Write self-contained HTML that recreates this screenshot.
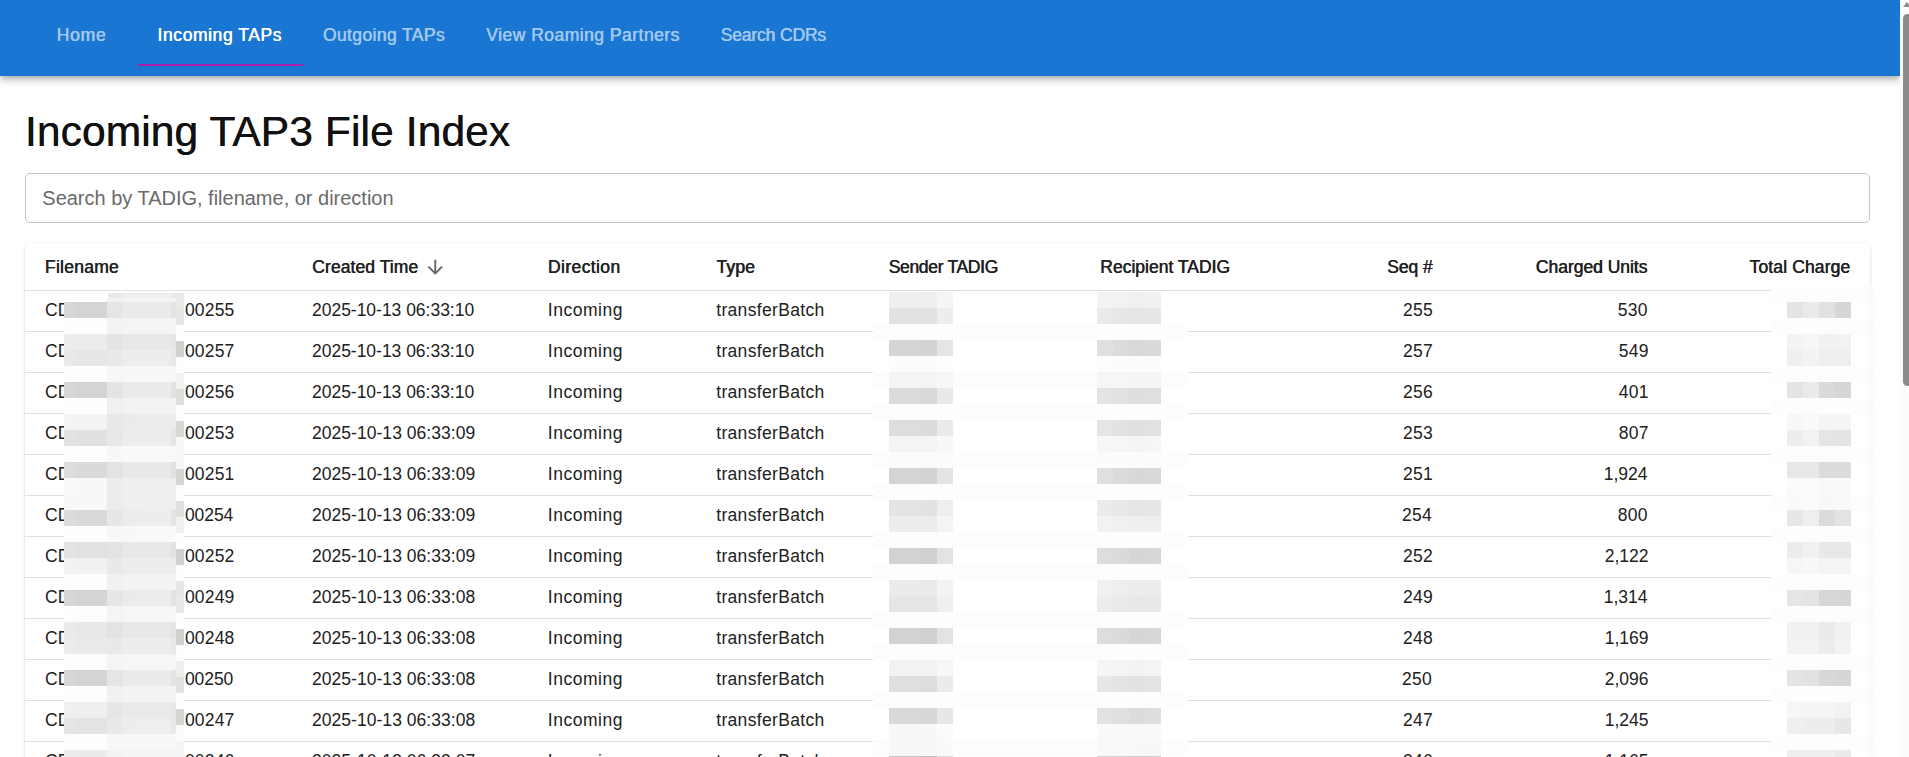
<!DOCTYPE html>
<html><head><meta charset="utf-8"><title>Incoming TAP3 File Index</title>
<style>
html,body{margin:0;padding:0;}
html,body{width:1909px;height:757px;overflow:hidden;background:#fff;}
#root{position:relative;width:1909px;height:757px;overflow:hidden;background:#fff;font-family:"Liberation Sans",sans-serif;}
.t{position:absolute;white-space:pre;line-height:1;color:#212121;font-size:17.5px;}
.m{text-shadow:0.55px 0 0 currentColor;}
.tb{text-shadow:0.4px 0 0 currentColor;}
.n{color:#a3c8ed;}
#bar{position:absolute;left:0;top:0;width:1900px;height:76px;background:#1976d2;box-shadow:0 2.5px 5px -1.25px rgba(0,0,0,.2),0 5px 6.25px 0 rgba(0,0,0,.14),0 1.25px 12.5px 0 rgba(0,0,0,.12);}
#ind{position:absolute;left:138px;top:64px;width:165px;height:2px;background:#a621ac;}
#sb{position:absolute;left:1900px;top:0;width:9px;height:757px;background:#fcfcfc;overflow:hidden;}
#thumb{position:absolute;left:3px;top:14px;width:9px;height:372px;border-radius:5px;background:#8b8b8b;}
#arr{position:absolute;left:3.3px;top:1.8px;width:0;height:0;border-left:4.5px solid transparent;border-right:4.5px solid transparent;border-bottom:5px solid #8b8b8b;}
#search{position:absolute;left:25px;top:173px;width:1843px;height:48px;border:1px solid #c4c4c4;border-radius:5px;}
#paper{position:absolute;left:25px;top:242.5px;width:1845px;height:600px;border-radius:5px;background:#fff;box-shadow:0 2.5px 1.25px -1.25px rgba(0,0,0,.2),0 1.25px 1.25px 0 rgba(0,0,0,.14),0 1.25px 3.75px 0 rgba(0,0,0,.12);}
.ln{position:absolute;left:25px;width:1845px;height:1px;background:#e0e0e0;}
#mos{position:absolute;left:0;top:0;}
</style></head><body><div id="root">
<div id="bar"></div><div id="ind"></div>
<div id="search"></div><div id="paper"></div>
<div class="ln" style="top:290px"></div>
<div class="ln" style="top:331px"></div>
<div class="ln" style="top:372px"></div>
<div class="ln" style="top:413px"></div>
<div class="ln" style="top:454px"></div>
<div class="ln" style="top:495px"></div>
<div class="ln" style="top:536px"></div>
<div class="ln" style="top:577px"></div>
<div class="ln" style="top:618px"></div>
<div class="ln" style="top:659px"></div>
<div class="ln" style="top:700px"></div>
<div class="ln" style="top:741px"></div>
<svg style="position:absolute;left:424px;top:256px" width="22.5" height="22.5" viewBox="0 0 24 24"><path fill="#666" d="M20 12l-1.41-1.41L13 16.17V4h-2v12.17l-5.58-5.59L4 12l8 8 8-8z"/></svg>
<div class="t m n" style="left:56.4px;top:27px;letter-spacing:0.8px;">Home</div>
<div class="t m" style="left:157.3px;top:27px;letter-spacing:0.58px;color:#ffffff;">Incoming TAPs</div>
<div class="t m n" style="left:322.7px;top:27px;letter-spacing:0.39px;">Outgoing TAPs</div>
<div class="t m n" style="left:486px;top:27px;letter-spacing:0.48px;">View Roaming Partners</div>
<div class="t m n" style="left:720.4px;top:27px;letter-spacing:-0.15px;">Search CDRs</div>
<div class="t tb" style="left:24.75px;top:111px;font-size:42.5px;letter-spacing:0.11px;color:#111111;">Incoming TAP3 File Index</div>
<div class="t" style="left:42.3px;top:188px;font-size:20px;letter-spacing:-0.01px;color:#6a6a6a;">Search by TADIG, filename, or direction</div>
<div class="t m" style="left:44.7px;top:259px;letter-spacing:0.27px;">Filename</div>
<div class="t m" style="left:312px;top:259px;letter-spacing:0.08px;">Created Time</div>
<div class="t m" style="left:547.8px;top:259px;letter-spacing:0.38px;">Direction</div>
<div class="t m" style="left:716.2px;top:259px;letter-spacing:0.21px;">Type</div>
<div class="t m" style="left:888.4px;top:259px;letter-spacing:-0.32px;">Sender TADIG</div>
<div class="t m" style="left:1100px;top:259px;letter-spacing:0.01px;">Recipient TADIG</div>
<div class="t m" style="left:1387px;top:259px;letter-spacing:-0.09px;">Seq #</div>
<div class="t m" style="left:1535.6px;top:259px;letter-spacing:-0.02px;">Charged Units</div>
<div class="t m" style="left:1749.3px;top:259px;letter-spacing:0.13px;">Total Charge</div>
<div class="t" style="left:44.9px;top:302px;letter-spacing:0.15px;">CD</div>
<div class="t" style="left:184.9px;top:302px;letter-spacing:0.19px;">00255</div>
<div class="t" style="left:312px;top:302px;letter-spacing:-0.02px;">2025-10-13 06:33:10</div>
<div class="t" style="left:547.8px;top:302px;letter-spacing:0.52px;">Incoming</div>
<div class="t" style="left:716.2px;top:302px;letter-spacing:0.33px;">transferBatch</div>
<div class="t" style="left:1403.03px;top:302px;letter-spacing:0.3px;">255</div>
<div class="t" style="left:1617.63px;top:302px;letter-spacing:0.3px;">530</div>
<div class="t" style="left:44.9px;top:343px;letter-spacing:0.15px;">CD</div>
<div class="t" style="left:184.9px;top:343px;letter-spacing:0.19px;">00257</div>
<div class="t" style="left:312px;top:343px;letter-spacing:-0.02px;">2025-10-13 06:33:10</div>
<div class="t" style="left:547.8px;top:343px;letter-spacing:0.52px;">Incoming</div>
<div class="t" style="left:716.2px;top:343px;letter-spacing:0.33px;">transferBatch</div>
<div class="t" style="left:1403.03px;top:343px;letter-spacing:0.3px;">257</div>
<div class="t" style="left:1618.63px;top:343px;letter-spacing:0.3px;">549</div>
<div class="t" style="left:44.9px;top:384px;letter-spacing:0.15px;">CD</div>
<div class="t" style="left:184.9px;top:384px;letter-spacing:0.19px;">00256</div>
<div class="t" style="left:312px;top:384px;letter-spacing:-0.02px;">2025-10-13 06:33:10</div>
<div class="t" style="left:547.8px;top:384px;letter-spacing:0.52px;">Incoming</div>
<div class="t" style="left:716.2px;top:384px;letter-spacing:0.33px;">transferBatch</div>
<div class="t" style="left:1403.03px;top:384px;letter-spacing:0.3px;">256</div>
<div class="t" style="left:1618.63px;top:384px;letter-spacing:0.3px;">401</div>
<div class="t" style="left:44.9px;top:425px;letter-spacing:0.15px;">CD</div>
<div class="t" style="left:184.9px;top:425px;letter-spacing:0.19px;">00253</div>
<div class="t" style="left:312px;top:425px;letter-spacing:0.04px;">2025-10-13 06:33:09</div>
<div class="t" style="left:547.8px;top:425px;letter-spacing:0.52px;">Incoming</div>
<div class="t" style="left:716.2px;top:425px;letter-spacing:0.33px;">transferBatch</div>
<div class="t" style="left:1403.03px;top:425px;letter-spacing:0.3px;">253</div>
<div class="t" style="left:1618.63px;top:425px;letter-spacing:0.3px;">807</div>
<div class="t" style="left:44.9px;top:466px;letter-spacing:0.15px;">CD</div>
<div class="t" style="left:184.9px;top:466px;letter-spacing:0.19px;">00251</div>
<div class="t" style="left:312px;top:466px;letter-spacing:0.04px;">2025-10-13 06:33:09</div>
<div class="t" style="left:547.8px;top:466px;letter-spacing:0.52px;">Incoming</div>
<div class="t" style="left:716.2px;top:466px;letter-spacing:0.33px;">transferBatch</div>
<div class="t" style="left:1403.03px;top:466px;letter-spacing:0.3px;">251</div>
<div class="t" style="left:1603.84px;top:466px;letter-spacing:-0.05px;">1,924</div>
<div class="t" style="left:44.9px;top:507px;letter-spacing:0.15px;">CD</div>
<div class="t" style="left:184.9px;top:507px;letter-spacing:-0.06px;">00254</div>
<div class="t" style="left:312px;top:507px;letter-spacing:0.04px;">2025-10-13 06:33:09</div>
<div class="t" style="left:547.8px;top:507px;letter-spacing:0.52px;">Incoming</div>
<div class="t" style="left:716.2px;top:507px;letter-spacing:0.33px;">transferBatch</div>
<div class="t" style="left:1402.03px;top:507px;letter-spacing:0.3px;">254</div>
<div class="t" style="left:1617.63px;top:507px;letter-spacing:0.3px;">800</div>
<div class="t" style="left:44.9px;top:548px;letter-spacing:0.15px;">CD</div>
<div class="t" style="left:184.9px;top:548px;letter-spacing:0.19px;">00252</div>
<div class="t" style="left:312px;top:548px;letter-spacing:0.04px;">2025-10-13 06:33:09</div>
<div class="t" style="left:547.8px;top:548px;letter-spacing:0.52px;">Incoming</div>
<div class="t" style="left:716.2px;top:548px;letter-spacing:0.33px;">transferBatch</div>
<div class="t" style="left:1403.03px;top:548px;letter-spacing:0.3px;">252</div>
<div class="t" style="left:1604.84px;top:548px;letter-spacing:-0.05px;">2,122</div>
<div class="t" style="left:44.9px;top:589px;letter-spacing:0.15px;">CD</div>
<div class="t" style="left:184.9px;top:589px;letter-spacing:0.19px;">00249</div>
<div class="t" style="left:312px;top:589px;letter-spacing:0.04px;">2025-10-13 06:33:08</div>
<div class="t" style="left:547.8px;top:589px;letter-spacing:0.52px;">Incoming</div>
<div class="t" style="left:716.2px;top:589px;letter-spacing:0.33px;">transferBatch</div>
<div class="t" style="left:1403.03px;top:589px;letter-spacing:0.3px;">249</div>
<div class="t" style="left:1603.84px;top:589px;letter-spacing:-0.05px;">1,314</div>
<div class="t" style="left:44.9px;top:630px;letter-spacing:0.15px;">CD</div>
<div class="t" style="left:184.9px;top:630px;letter-spacing:0.19px;">00248</div>
<div class="t" style="left:312px;top:630px;letter-spacing:0.04px;">2025-10-13 06:33:08</div>
<div class="t" style="left:547.8px;top:630px;letter-spacing:0.52px;">Incoming</div>
<div class="t" style="left:716.2px;top:630px;letter-spacing:0.33px;">transferBatch</div>
<div class="t" style="left:1403.03px;top:630px;letter-spacing:0.3px;">248</div>
<div class="t" style="left:1604.84px;top:630px;letter-spacing:-0.05px;">1,169</div>
<div class="t" style="left:44.9px;top:671px;letter-spacing:0.15px;">CD</div>
<div class="t" style="left:184.9px;top:671px;letter-spacing:-0.06px;">00250</div>
<div class="t" style="left:312px;top:671px;letter-spacing:0.04px;">2025-10-13 06:33:08</div>
<div class="t" style="left:547.8px;top:671px;letter-spacing:0.52px;">Incoming</div>
<div class="t" style="left:716.2px;top:671px;letter-spacing:0.33px;">transferBatch</div>
<div class="t" style="left:1402.03px;top:671px;letter-spacing:0.3px;">250</div>
<div class="t" style="left:1604.84px;top:671px;letter-spacing:-0.05px;">2,096</div>
<div class="t" style="left:44.9px;top:712px;letter-spacing:0.15px;">CD</div>
<div class="t" style="left:184.9px;top:712px;letter-spacing:0.19px;">00247</div>
<div class="t" style="left:312px;top:712px;letter-spacing:0.04px;">2025-10-13 06:33:08</div>
<div class="t" style="left:547.8px;top:712px;letter-spacing:0.52px;">Incoming</div>
<div class="t" style="left:716.2px;top:712px;letter-spacing:0.33px;">transferBatch</div>
<div class="t" style="left:1403.03px;top:712px;letter-spacing:0.3px;">247</div>
<div class="t" style="left:1604.84px;top:712px;letter-spacing:-0.05px;">1,245</div>
<div class="t" style="left:44.9px;top:753px;letter-spacing:0.15px;">CD</div>
<div class="t" style="left:184.9px;top:753px;letter-spacing:0.19px;">00246</div>
<div class="t" style="left:312px;top:753px;letter-spacing:0.04px;">2025-10-13 06:33:07</div>
<div class="t" style="left:547.8px;top:753px;letter-spacing:0.52px;">Incoming</div>
<div class="t" style="left:716.2px;top:753px;letter-spacing:0.33px;">transferBatch</div>
<div class="t" style="left:1403.03px;top:753px;letter-spacing:0.3px;">246</div>
<div class="t" style="left:1604.84px;top:753px;letter-spacing:-0.05px;">1,165</div>
<svg id="mos" width="1909" height="757" viewBox="0 0 1909 757" shape-rendering="crispEdges">
<rect x="108" y="293" width="16" height="16" fill="#eaeaea"/>
<rect x="124" y="293" width="48" height="16" fill="#eeeeee"/>
<rect x="172" y="293" width="12" height="16" fill="#eaeaea"/>
<rect x="108" y="309" width="16" height="16" fill="#e4e4e4"/>
<rect x="124" y="309" width="48" height="16" fill="#e9e9e9"/>
<rect x="172" y="309" width="12" height="16" fill="#e5e5e5"/>
<rect x="108" y="325" width="76" height="16" fill="#fdfdfd"/>
<rect x="108" y="341" width="16" height="16" fill="#cfcfcf"/>
<rect x="124" y="341" width="48" height="16" fill="#d8d8d8"/>
<rect x="172" y="341" width="12" height="16" fill="#d0d0d0"/>
<rect x="108" y="357" width="76" height="16" fill="#fdfdfd"/>
<rect x="108" y="373" width="16" height="16" fill="#f1f1f1"/>
<rect x="124" y="373" width="48" height="16" fill="#f4f4f4"/>
<rect x="172" y="373" width="12" height="16" fill="#f2f2f2"/>
<rect x="108" y="389" width="16" height="16" fill="#dddddd"/>
<rect x="124" y="389" width="48" height="16" fill="#e3e3e3"/>
<rect x="172" y="389" width="12" height="16" fill="#dedede"/>
<rect x="108" y="405" width="76" height="16" fill="#fdfdfd"/>
<rect x="108" y="421" width="16" height="16" fill="#d6d6d6"/>
<rect x="124" y="421" width="48" height="16" fill="#dedede"/>
<rect x="172" y="421" width="12" height="16" fill="#d8d8d8"/>
<rect x="108" y="437" width="16" height="16" fill="#f8f8f8"/>
<rect x="124" y="437" width="48" height="16" fill="#f9f9f9"/>
<rect x="172" y="437" width="12" height="16" fill="#f8f8f8"/>
<rect x="108" y="453" width="16" height="16" fill="#f7f7f7"/>
<rect x="124" y="453" width="48" height="16" fill="#f8f8f8"/>
<rect x="172" y="453" width="12" height="16" fill="#f7f7f7"/>
<rect x="108" y="469" width="16" height="16" fill="#d5d5d5"/>
<rect x="124" y="469" width="48" height="16" fill="#dddddd"/>
<rect x="172" y="469" width="12" height="16" fill="#d6d6d6"/>
<rect x="108" y="485" width="76" height="16" fill="#fdfdfd"/>
<rect x="108" y="501" width="16" height="16" fill="#dedede"/>
<rect x="124" y="501" width="48" height="16" fill="#e4e4e4"/>
<rect x="172" y="501" width="12" height="16" fill="#dfdfdf"/>
<rect x="108" y="517" width="16" height="16" fill="#f0f0f0"/>
<rect x="124" y="517" width="48" height="16" fill="#f3f3f3"/>
<rect x="172" y="517" width="12" height="16" fill="#f0f0f0"/>
<rect x="108" y="533" width="76" height="16" fill="#fdfdfd"/>
<rect x="108" y="549" width="16" height="16" fill="#cfcfcf"/>
<rect x="124" y="549" width="48" height="16" fill="#d8d8d8"/>
<rect x="172" y="549" width="12" height="16" fill="#d0d0d0"/>
<rect x="108" y="565" width="76" height="16" fill="#fdfdfd"/>
<rect x="108" y="581" width="16" height="16" fill="#e6e6e6"/>
<rect x="124" y="581" width="48" height="16" fill="#ebebeb"/>
<rect x="172" y="581" width="12" height="16" fill="#e7e7e7"/>
<rect x="108" y="597" width="16" height="16" fill="#e8e8e8"/>
<rect x="124" y="597" width="48" height="16" fill="#ededed"/>
<rect x="172" y="597" width="12" height="16" fill="#e9e9e9"/>
<rect x="108" y="613" width="76" height="16" fill="#fdfdfd"/>
<rect x="108" y="629" width="16" height="16" fill="#cfcfcf"/>
<rect x="124" y="629" width="48" height="16" fill="#d8d8d8"/>
<rect x="172" y="629" width="12" height="16" fill="#d0d0d0"/>
<rect x="108" y="645" width="76" height="16" fill="#fdfdfd"/>
<rect x="108" y="661" width="16" height="16" fill="#eeeeee"/>
<rect x="124" y="661" width="48" height="16" fill="#f1f1f1"/>
<rect x="172" y="661" width="12" height="16" fill="#eeeeee"/>
<rect x="108" y="677" width="16" height="16" fill="#e0e0e0"/>
<rect x="124" y="677" width="48" height="16" fill="#e6e6e6"/>
<rect x="172" y="677" width="12" height="16" fill="#e1e1e1"/>
<rect x="108" y="693" width="76" height="16" fill="#fdfdfd"/>
<rect x="108" y="709" width="16" height="16" fill="#d2d2d2"/>
<rect x="124" y="709" width="48" height="16" fill="#dbdbdb"/>
<rect x="172" y="709" width="12" height="16" fill="#d4d4d4"/>
<rect x="108" y="725" width="76" height="16" fill="#fcfcfc"/>
<rect x="108" y="741" width="16" height="16" fill="#f3f3f3"/>
<rect x="124" y="741" width="48" height="16" fill="#f5f5f5"/>
<rect x="172" y="741" width="12" height="16" fill="#f4f4f4"/>
<rect x="64" y="298" width="43" height="4" fill="#fdfdfd"/>
<rect x="107" y="298" width="16" height="4" fill="#f2f2f2"/>
<rect x="123" y="298" width="48" height="4" fill="#f3f3f3"/>
<rect x="171" y="298" width="5" height="4" fill="#f4f4f4"/>
<rect x="64" y="302" width="11" height="16" fill="#d7d7d7"/>
<rect x="75" y="302" width="32" height="16" fill="#d4d4d4"/>
<rect x="107" y="302" width="16" height="16" fill="#e5e5e5"/>
<rect x="123" y="302" width="48" height="16" fill="#ebebeb"/>
<rect x="171" y="302" width="5" height="16" fill="#e5e2df"/>
<rect x="64" y="318" width="43" height="16" fill="#fdfdfd"/>
<rect x="107" y="318" width="16" height="16" fill="#f3f3f3"/>
<rect x="123" y="318" width="48" height="16" fill="#f4f4f4"/>
<rect x="171" y="318" width="5" height="16" fill="#f5f5f5"/>
<rect x="64" y="334" width="11" height="16" fill="#ededed"/>
<rect x="75" y="334" width="32" height="16" fill="#ececec"/>
<rect x="107" y="334" width="16" height="16" fill="#e4e4e4"/>
<rect x="123" y="334" width="48" height="16" fill="#e8e8e8"/>
<rect x="171" y="334" width="5" height="16" fill="#e6e5e4"/>
<rect x="64" y="350" width="11" height="16" fill="#e9e9e9"/>
<rect x="75" y="350" width="32" height="16" fill="#e7e7e7"/>
<rect x="107" y="350" width="16" height="16" fill="#e9e9e9"/>
<rect x="123" y="350" width="48" height="16" fill="#ededed"/>
<rect x="171" y="350" width="5" height="16" fill="#eae8e7"/>
<rect x="64" y="366" width="43" height="16" fill="#fdfdfd"/>
<rect x="107" y="366" width="16" height="16" fill="#f7f7f7"/>
<rect x="123" y="366" width="53" height="16" fill="#f8f8f8"/>
<rect x="64" y="382" width="11" height="16" fill="#d7d7d7"/>
<rect x="75" y="382" width="32" height="16" fill="#d4d4d4"/>
<rect x="107" y="382" width="16" height="16" fill="#e4e4e4"/>
<rect x="123" y="382" width="16" height="16" fill="#eaeaea"/>
<rect x="139" y="382" width="32" height="16" fill="#ebebeb"/>
<rect x="171" y="382" width="5" height="16" fill="#e4e1df"/>
<rect x="64" y="398" width="43" height="16" fill="#fdfdfd"/>
<rect x="107" y="398" width="16" height="16" fill="#f0f0f0"/>
<rect x="123" y="398" width="53" height="16" fill="#f2f2f2"/>
<rect x="64" y="414" width="11" height="16" fill="#f4f4f4"/>
<rect x="75" y="414" width="32" height="16" fill="#f3f3f3"/>
<rect x="107" y="414" width="16" height="16" fill="#e8e8e8"/>
<rect x="123" y="414" width="16" height="16" fill="#ebebeb"/>
<rect x="139" y="414" width="32" height="16" fill="#ececec"/>
<rect x="171" y="414" width="5" height="16" fill="#ebebea"/>
<rect x="64" y="430" width="11" height="16" fill="#e2e2e2"/>
<rect x="75" y="430" width="32" height="16" fill="#e0e0e0"/>
<rect x="107" y="430" width="16" height="16" fill="#e8e8e8"/>
<rect x="123" y="430" width="48" height="16" fill="#ededed"/>
<rect x="171" y="430" width="5" height="16" fill="#e8e6e4"/>
<rect x="64" y="446" width="43" height="16" fill="#fdfdfd"/>
<rect x="107" y="446" width="16" height="16" fill="#f8f8f8"/>
<rect x="123" y="446" width="53" height="16" fill="#f9f9f9"/>
<rect x="64" y="462" width="11" height="16" fill="#dddddd"/>
<rect x="75" y="462" width="32" height="16" fill="#dadada"/>
<rect x="107" y="462" width="16" height="16" fill="#e3e3e3"/>
<rect x="123" y="462" width="48" height="16" fill="#e9e9e9"/>
<rect x="171" y="462" width="5" height="16" fill="#e3e0de"/>
<rect x="64" y="478" width="11" height="16" fill="#f9f9f9"/>
<rect x="75" y="478" width="32" height="16" fill="#f8f8f8"/>
<rect x="107" y="478" width="16" height="16" fill="#ececec"/>
<rect x="123" y="478" width="48" height="16" fill="#efefef"/>
<rect x="171" y="478" width="5" height="16" fill="#f0efef"/>
<rect x="64" y="494" width="43" height="16" fill="#f8f8f8"/>
<rect x="107" y="494" width="16" height="16" fill="#ececec"/>
<rect x="123" y="494" width="53" height="16" fill="#efefef"/>
<rect x="64" y="510" width="11" height="16" fill="#dcdcdc"/>
<rect x="75" y="510" width="32" height="16" fill="#d9d9d9"/>
<rect x="107" y="510" width="16" height="16" fill="#e7e7e7"/>
<rect x="123" y="510" width="16" height="16" fill="#ececec"/>
<rect x="139" y="510" width="32" height="16" fill="#ededed"/>
<rect x="171" y="510" width="5" height="16" fill="#e6e4e1"/>
<rect x="64" y="526" width="43" height="16" fill="#fdfdfd"/>
<rect x="107" y="526" width="32" height="16" fill="#f8f8f8"/>
<rect x="139" y="526" width="37" height="16" fill="#f9f9f9"/>
<rect x="64" y="542" width="11" height="16" fill="#e3e3e3"/>
<rect x="75" y="542" width="32" height="16" fill="#e1e1e1"/>
<rect x="107" y="542" width="16" height="16" fill="#e3e3e3"/>
<rect x="123" y="542" width="48" height="16" fill="#e8e8e8"/>
<rect x="171" y="542" width="5" height="16" fill="#e4e2df"/>
<rect x="64" y="558" width="11" height="16" fill="#f2f2f2"/>
<rect x="75" y="558" width="32" height="16" fill="#f1f1f1"/>
<rect x="107" y="558" width="16" height="16" fill="#e9e9e9"/>
<rect x="123" y="558" width="48" height="16" fill="#ededed"/>
<rect x="171" y="558" width="5" height="16" fill="#edeceb"/>
<rect x="64" y="574" width="43" height="16" fill="#fdfdfd"/>
<rect x="107" y="574" width="16" height="16" fill="#f1f1f1"/>
<rect x="123" y="574" width="53" height="16" fill="#f3f3f3"/>
<rect x="64" y="590" width="11" height="16" fill="#d7d7d7"/>
<rect x="75" y="590" width="32" height="16" fill="#d4d4d4"/>
<rect x="107" y="590" width="16" height="16" fill="#e6e6e6"/>
<rect x="123" y="590" width="16" height="16" fill="#ebebeb"/>
<rect x="139" y="590" width="32" height="16" fill="#ececec"/>
<rect x="171" y="590" width="5" height="16" fill="#e5e3e0"/>
<rect x="64" y="606" width="43" height="16" fill="#fdfdfd"/>
<rect x="107" y="606" width="16" height="16" fill="#f4f4f4"/>
<rect x="123" y="606" width="53" height="16" fill="#f6f6f6"/>
<rect x="64" y="622" width="11" height="16" fill="#eaeaea"/>
<rect x="75" y="622" width="32" height="16" fill="#e8e8e8"/>
<rect x="107" y="622" width="16" height="16" fill="#e3e3e3"/>
<rect x="123" y="622" width="48" height="16" fill="#e8e8e8"/>
<rect x="171" y="622" width="5" height="16" fill="#e5e4e2"/>
<rect x="64" y="638" width="11" height="16" fill="#ececec"/>
<rect x="75" y="638" width="32" height="16" fill="#eaeaea"/>
<rect x="107" y="638" width="16" height="16" fill="#e9e9e9"/>
<rect x="123" y="638" width="48" height="16" fill="#ededed"/>
<rect x="171" y="638" width="5" height="16" fill="#ebe9e8"/>
<rect x="64" y="654" width="43" height="16" fill="#fdfdfd"/>
<rect x="107" y="654" width="16" height="16" fill="#f5f5f5"/>
<rect x="123" y="654" width="53" height="16" fill="#f6f6f6"/>
<rect x="64" y="670" width="11" height="16" fill="#d7d7d7"/>
<rect x="75" y="670" width="32" height="16" fill="#d4d4d4"/>
<rect x="107" y="670" width="16" height="16" fill="#e5e5e5"/>
<rect x="123" y="670" width="48" height="16" fill="#ebebeb"/>
<rect x="171" y="670" width="5" height="16" fill="#e5e2df"/>
<rect x="64" y="686" width="43" height="16" fill="#fdfdfd"/>
<rect x="107" y="686" width="16" height="16" fill="#f1f1f1"/>
<rect x="123" y="686" width="53" height="16" fill="#f3f3f3"/>
<rect x="64" y="702" width="11" height="16" fill="#f0f0f0"/>
<rect x="75" y="702" width="32" height="16" fill="#efefef"/>
<rect x="107" y="702" width="16" height="16" fill="#e6e6e6"/>
<rect x="123" y="702" width="48" height="16" fill="#eaeaea"/>
<rect x="171" y="702" width="5" height="16" fill="#e9e8e7"/>
<rect x="64" y="718" width="11" height="16" fill="#e5e5e5"/>
<rect x="75" y="718" width="32" height="16" fill="#e3e3e3"/>
<rect x="107" y="718" width="16" height="16" fill="#e9e9e9"/>
<rect x="123" y="718" width="16" height="16" fill="#ededed"/>
<rect x="139" y="718" width="32" height="16" fill="#eeeeee"/>
<rect x="171" y="718" width="5" height="16" fill="#e9e8e6"/>
<rect x="64" y="734" width="43" height="16" fill="#fdfdfd"/>
<rect x="107" y="734" width="16" height="16" fill="#f7f7f7"/>
<rect x="123" y="734" width="53" height="16" fill="#f8f8f8"/>
<rect x="64" y="750" width="11" height="7" fill="#ececec"/>
<rect x="75" y="750" width="32" height="7" fill="#ebebeb"/>
<rect x="107" y="750" width="16" height="7" fill="#f3f3f3"/>
<rect x="123" y="750" width="48" height="7" fill="#f5f5f5"/>
<rect x="171" y="750" width="5" height="7" fill="#f5f4f3"/>
<rect x="873" y="292" width="16" height="16" fill="#ffffff"/>
<rect x="889" y="292" width="32" height="16" fill="#efefef"/>
<rect x="921" y="292" width="16" height="16" fill="#eeeeee"/>
<rect x="937" y="292" width="16" height="16" fill="#f5f5f5"/>
<rect x="953" y="292" width="144" height="16" fill="#ffffff"/>
<rect x="1097" y="292" width="16" height="16" fill="#f3f3f3"/>
<rect x="1113" y="292" width="16" height="16" fill="#f2f2f2"/>
<rect x="1129" y="292" width="16" height="16" fill="#f0f0f0"/>
<rect x="1145" y="292" width="16" height="16" fill="#f1f1f1"/>
<rect x="1161" y="292" width="27" height="16" fill="#ffffff"/>
<rect x="873" y="308" width="16" height="16" fill="#ffffff"/>
<rect x="889" y="308" width="32" height="16" fill="#e2e2e2"/>
<rect x="921" y="308" width="16" height="16" fill="#e1e1e1"/>
<rect x="937" y="308" width="16" height="16" fill="#ededed"/>
<rect x="953" y="308" width="144" height="16" fill="#ffffff"/>
<rect x="1097" y="308" width="16" height="16" fill="#eaeaea"/>
<rect x="1113" y="308" width="16" height="16" fill="#e7e7e7"/>
<rect x="1129" y="308" width="16" height="16" fill="#e5e5e5"/>
<rect x="1145" y="308" width="16" height="16" fill="#e6e6e6"/>
<rect x="1161" y="308" width="27" height="16" fill="#ffffff"/>
<rect x="873" y="324" width="315" height="16" fill="#fdfdfd"/>
<rect x="873" y="340" width="16" height="16" fill="#ffffff"/>
<rect x="889" y="340" width="32" height="16" fill="#d5d5d5"/>
<rect x="921" y="340" width="16" height="16" fill="#d3d3d3"/>
<rect x="937" y="340" width="16" height="16" fill="#e5e5e5"/>
<rect x="953" y="340" width="144" height="16" fill="#ffffff"/>
<rect x="1097" y="340" width="16" height="16" fill="#e0e0e0"/>
<rect x="1113" y="340" width="16" height="16" fill="#dcdcdc"/>
<rect x="1129" y="340" width="16" height="16" fill="#d9d9d9"/>
<rect x="1145" y="340" width="16" height="16" fill="#dadada"/>
<rect x="1161" y="340" width="27" height="16" fill="#ffffff"/>
<rect x="873" y="356" width="16" height="16" fill="#ffffff"/>
<rect x="889" y="356" width="48" height="16" fill="#fcfcfc"/>
<rect x="937" y="356" width="16" height="16" fill="#fdfdfd"/>
<rect x="953" y="356" width="144" height="16" fill="#ffffff"/>
<rect x="1097" y="356" width="16" height="16" fill="#fdfdfd"/>
<rect x="1113" y="356" width="48" height="16" fill="#fcfcfc"/>
<rect x="1161" y="356" width="27" height="16" fill="#ffffff"/>
<rect x="873" y="372" width="16" height="16" fill="#fdfdfd"/>
<rect x="889" y="372" width="48" height="16" fill="#f4f4f4"/>
<rect x="937" y="372" width="16" height="16" fill="#f7f7f7"/>
<rect x="953" y="372" width="144" height="16" fill="#fdfdfd"/>
<rect x="1097" y="372" width="32" height="16" fill="#f6f6f6"/>
<rect x="1129" y="372" width="32" height="16" fill="#f5f5f5"/>
<rect x="1161" y="372" width="27" height="16" fill="#fdfdfd"/>
<rect x="873" y="388" width="16" height="16" fill="#ffffff"/>
<rect x="889" y="388" width="32" height="16" fill="#dbdbdb"/>
<rect x="921" y="388" width="16" height="16" fill="#d9d9d9"/>
<rect x="937" y="388" width="16" height="16" fill="#e9e9e9"/>
<rect x="953" y="388" width="144" height="16" fill="#ffffff"/>
<rect x="1097" y="388" width="16" height="16" fill="#e4e4e4"/>
<rect x="1113" y="388" width="16" height="16" fill="#e1e1e1"/>
<rect x="1129" y="388" width="16" height="16" fill="#dedede"/>
<rect x="1145" y="388" width="16" height="16" fill="#dfdfdf"/>
<rect x="1161" y="388" width="27" height="16" fill="#ffffff"/>
<rect x="873" y="404" width="315" height="16" fill="#fdfdfd"/>
<rect x="873" y="420" width="16" height="16" fill="#ffffff"/>
<rect x="889" y="420" width="32" height="16" fill="#dddddd"/>
<rect x="921" y="420" width="16" height="16" fill="#dbdbdb"/>
<rect x="937" y="420" width="16" height="16" fill="#eaeaea"/>
<rect x="953" y="420" width="144" height="16" fill="#ffffff"/>
<rect x="1097" y="420" width="16" height="16" fill="#e5e5e5"/>
<rect x="1113" y="420" width="16" height="16" fill="#e2e2e2"/>
<rect x="1129" y="420" width="16" height="16" fill="#e0e0e0"/>
<rect x="1145" y="420" width="16" height="16" fill="#e1e1e1"/>
<rect x="1161" y="420" width="27" height="16" fill="#ffffff"/>
<rect x="873" y="436" width="16" height="16" fill="#ffffff"/>
<rect x="889" y="436" width="48" height="16" fill="#f4f4f4"/>
<rect x="937" y="436" width="16" height="16" fill="#f8f8f8"/>
<rect x="953" y="436" width="144" height="16" fill="#ffffff"/>
<rect x="1097" y="436" width="16" height="16" fill="#f7f7f7"/>
<rect x="1113" y="436" width="16" height="16" fill="#f6f6f6"/>
<rect x="1129" y="436" width="16" height="16" fill="#f5f5f5"/>
<rect x="1145" y="436" width="16" height="16" fill="#f6f6f6"/>
<rect x="1161" y="436" width="27" height="16" fill="#ffffff"/>
<rect x="873" y="452" width="16" height="16" fill="#fdfdfd"/>
<rect x="889" y="452" width="48" height="16" fill="#fbfbfb"/>
<rect x="937" y="452" width="16" height="16" fill="#fcfcfc"/>
<rect x="953" y="452" width="144" height="16" fill="#fdfdfd"/>
<rect x="1097" y="452" width="32" height="16" fill="#fcfcfc"/>
<rect x="1129" y="452" width="32" height="16" fill="#fbfbfb"/>
<rect x="1161" y="452" width="27" height="16" fill="#fdfdfd"/>
<rect x="873" y="468" width="16" height="16" fill="#ffffff"/>
<rect x="889" y="468" width="32" height="16" fill="#d4d4d4"/>
<rect x="921" y="468" width="16" height="16" fill="#d2d2d2"/>
<rect x="937" y="468" width="16" height="16" fill="#e4e4e4"/>
<rect x="953" y="468" width="144" height="16" fill="#ffffff"/>
<rect x="1097" y="468" width="16" height="16" fill="#dfdfdf"/>
<rect x="1113" y="468" width="16" height="16" fill="#dbdbdb"/>
<rect x="1129" y="468" width="16" height="16" fill="#d8d8d8"/>
<rect x="1145" y="468" width="16" height="16" fill="#d9d9d9"/>
<rect x="1161" y="468" width="27" height="16" fill="#ffffff"/>
<rect x="873" y="484" width="315" height="16" fill="#fdfdfd"/>
<rect x="873" y="500" width="16" height="16" fill="#ffffff"/>
<rect x="889" y="500" width="32" height="16" fill="#e4e4e4"/>
<rect x="921" y="500" width="16" height="16" fill="#e2e2e2"/>
<rect x="937" y="500" width="16" height="16" fill="#eeeeee"/>
<rect x="953" y="500" width="144" height="16" fill="#ffffff"/>
<rect x="1097" y="500" width="16" height="16" fill="#ebebeb"/>
<rect x="1113" y="500" width="16" height="16" fill="#e8e8e8"/>
<rect x="1129" y="500" width="16" height="16" fill="#e6e6e6"/>
<rect x="1145" y="500" width="16" height="16" fill="#e7e7e7"/>
<rect x="1161" y="500" width="27" height="16" fill="#ffffff"/>
<rect x="873" y="516" width="16" height="16" fill="#ffffff"/>
<rect x="889" y="516" width="32" height="16" fill="#ededed"/>
<rect x="921" y="516" width="16" height="16" fill="#ececec"/>
<rect x="937" y="516" width="16" height="16" fill="#f4f4f4"/>
<rect x="953" y="516" width="144" height="16" fill="#ffffff"/>
<rect x="1097" y="516" width="16" height="16" fill="#f2f2f2"/>
<rect x="1113" y="516" width="16" height="16" fill="#f0f0f0"/>
<rect x="1129" y="516" width="32" height="16" fill="#efefef"/>
<rect x="1161" y="516" width="27" height="16" fill="#ffffff"/>
<rect x="873" y="532" width="315" height="16" fill="#fdfdfd"/>
<rect x="873" y="548" width="16" height="16" fill="#ffffff"/>
<rect x="889" y="548" width="32" height="16" fill="#d2d2d2"/>
<rect x="921" y="548" width="16" height="16" fill="#d0d0d0"/>
<rect x="937" y="548" width="16" height="16" fill="#e3e3e3"/>
<rect x="953" y="548" width="144" height="16" fill="#ffffff"/>
<rect x="1097" y="548" width="16" height="16" fill="#dddddd"/>
<rect x="1113" y="548" width="16" height="16" fill="#dadada"/>
<rect x="1129" y="548" width="16" height="16" fill="#d6d6d6"/>
<rect x="1145" y="548" width="16" height="16" fill="#d7d7d7"/>
<rect x="1161" y="548" width="27" height="16" fill="#ffffff"/>
<rect x="873" y="564" width="315" height="16" fill="#fdfdfd"/>
<rect x="873" y="580" width="16" height="16" fill="#ffffff"/>
<rect x="889" y="580" width="32" height="16" fill="#ebebeb"/>
<rect x="921" y="580" width="16" height="16" fill="#eaeaea"/>
<rect x="937" y="580" width="16" height="16" fill="#f3f3f3"/>
<rect x="953" y="580" width="144" height="16" fill="#ffffff"/>
<rect x="1097" y="580" width="16" height="16" fill="#f0f0f0"/>
<rect x="1113" y="580" width="16" height="16" fill="#eeeeee"/>
<rect x="1129" y="580" width="32" height="16" fill="#ededed"/>
<rect x="1161" y="580" width="27" height="16" fill="#ffffff"/>
<rect x="873" y="596" width="16" height="16" fill="#ffffff"/>
<rect x="889" y="596" width="32" height="16" fill="#e6e6e6"/>
<rect x="921" y="596" width="16" height="16" fill="#e5e5e5"/>
<rect x="937" y="596" width="16" height="16" fill="#efefef"/>
<rect x="953" y="596" width="144" height="16" fill="#ffffff"/>
<rect x="1097" y="596" width="16" height="16" fill="#ececec"/>
<rect x="1113" y="596" width="16" height="16" fill="#eaeaea"/>
<rect x="1129" y="596" width="16" height="16" fill="#e8e8e8"/>
<rect x="1145" y="596" width="16" height="16" fill="#e9e9e9"/>
<rect x="1161" y="596" width="27" height="16" fill="#ffffff"/>
<rect x="873" y="612" width="315" height="16" fill="#fdfdfd"/>
<rect x="873" y="628" width="16" height="16" fill="#ffffff"/>
<rect x="889" y="628" width="32" height="16" fill="#d2d2d2"/>
<rect x="921" y="628" width="16" height="16" fill="#d0d0d0"/>
<rect x="937" y="628" width="16" height="16" fill="#e3e3e3"/>
<rect x="953" y="628" width="144" height="16" fill="#ffffff"/>
<rect x="1097" y="628" width="16" height="16" fill="#dddddd"/>
<rect x="1113" y="628" width="16" height="16" fill="#dadada"/>
<rect x="1129" y="628" width="16" height="16" fill="#d6d6d6"/>
<rect x="1145" y="628" width="16" height="16" fill="#d7d7d7"/>
<rect x="1161" y="628" width="27" height="16" fill="#ffffff"/>
<rect x="873" y="644" width="315" height="16" fill="#fdfdfd"/>
<rect x="873" y="660" width="16" height="16" fill="#ffffff"/>
<rect x="889" y="660" width="48" height="16" fill="#f2f2f2"/>
<rect x="937" y="660" width="16" height="16" fill="#f7f7f7"/>
<rect x="953" y="660" width="144" height="16" fill="#ffffff"/>
<rect x="1097" y="660" width="16" height="16" fill="#f5f5f5"/>
<rect x="1113" y="660" width="16" height="16" fill="#f4f4f4"/>
<rect x="1129" y="660" width="16" height="16" fill="#f3f3f3"/>
<rect x="1145" y="660" width="16" height="16" fill="#f4f4f4"/>
<rect x="1161" y="660" width="27" height="16" fill="#ffffff"/>
<rect x="873" y="676" width="16" height="16" fill="#ffffff"/>
<rect x="889" y="676" width="32" height="16" fill="#dfdfdf"/>
<rect x="921" y="676" width="16" height="16" fill="#dddddd"/>
<rect x="937" y="676" width="16" height="16" fill="#ebebeb"/>
<rect x="953" y="676" width="144" height="16" fill="#ffffff"/>
<rect x="1097" y="676" width="16" height="16" fill="#e7e7e7"/>
<rect x="1113" y="676" width="16" height="16" fill="#e4e4e4"/>
<rect x="1129" y="676" width="16" height="16" fill="#e2e2e2"/>
<rect x="1145" y="676" width="16" height="16" fill="#e3e3e3"/>
<rect x="1161" y="676" width="27" height="16" fill="#ffffff"/>
<rect x="873" y="692" width="315" height="16" fill="#fdfdfd"/>
<rect x="873" y="708" width="16" height="16" fill="#ffffff"/>
<rect x="889" y="708" width="32" height="16" fill="#d9d9d9"/>
<rect x="921" y="708" width="16" height="16" fill="#d7d7d7"/>
<rect x="937" y="708" width="16" height="16" fill="#e7e7e7"/>
<rect x="953" y="708" width="144" height="16" fill="#ffffff"/>
<rect x="1097" y="708" width="16" height="16" fill="#e2e2e2"/>
<rect x="1113" y="708" width="16" height="16" fill="#e0e0e0"/>
<rect x="1129" y="708" width="16" height="16" fill="#dcdcdc"/>
<rect x="1145" y="708" width="16" height="16" fill="#dedede"/>
<rect x="1161" y="708" width="27" height="16" fill="#ffffff"/>
<rect x="873" y="724" width="16" height="16" fill="#ffffff"/>
<rect x="889" y="724" width="48" height="16" fill="#f8f8f8"/>
<rect x="937" y="724" width="16" height="16" fill="#fbfbfb"/>
<rect x="953" y="724" width="144" height="16" fill="#ffffff"/>
<rect x="1097" y="724" width="16" height="16" fill="#fafafa"/>
<rect x="1113" y="724" width="48" height="16" fill="#f9f9f9"/>
<rect x="1161" y="724" width="27" height="16" fill="#ffffff"/>
<rect x="873" y="740" width="16" height="16" fill="#fdfdfd"/>
<rect x="889" y="740" width="32" height="16" fill="#f8f8f8"/>
<rect x="921" y="740" width="16" height="16" fill="#f7f7f7"/>
<rect x="937" y="740" width="16" height="16" fill="#fafafa"/>
<rect x="953" y="740" width="144" height="16" fill="#fdfdfd"/>
<rect x="1097" y="740" width="32" height="16" fill="#f9f9f9"/>
<rect x="1129" y="740" width="32" height="16" fill="#f8f8f8"/>
<rect x="1161" y="740" width="27" height="16" fill="#fdfdfd"/>
<rect x="873" y="756" width="16" height="1" fill="#ffffff"/>
<rect x="889" y="756" width="32" height="1" fill="#c5c5c5"/>
<rect x="921" y="756" width="16" height="1" fill="#c2c2c2"/>
<rect x="937" y="756" width="16" height="1" fill="#dbdbdb"/>
<rect x="953" y="756" width="144" height="1" fill="#ffffff"/>
<rect x="1097" y="756" width="16" height="1" fill="#d4d4d4"/>
<rect x="1113" y="756" width="16" height="1" fill="#cfcfcf"/>
<rect x="1129" y="756" width="16" height="1" fill="#cacaca"/>
<rect x="1145" y="756" width="16" height="1" fill="#cccccc"/>
<rect x="1161" y="756" width="27" height="1" fill="#ffffff"/>
<rect x="1771" y="286" width="96" height="16" fill="#fdfdfd"/>
<rect x="1867" y="286" width="8" height="16" fill="#fbfbfb"/>
<rect x="1771" y="302" width="16" height="16" fill="#ffffff"/>
<rect x="1787" y="302" width="16" height="16" fill="#e4e4e4"/>
<rect x="1803" y="302" width="16" height="16" fill="#eaeaea"/>
<rect x="1819" y="302" width="16" height="16" fill="#e1e1e1"/>
<rect x="1835" y="302" width="16" height="16" fill="#d6d6d6"/>
<rect x="1851" y="302" width="16" height="16" fill="#ffffff"/>
<rect x="1867" y="302" width="8" height="16" fill="#fcfcfc"/>
<rect x="1771" y="318" width="96" height="16" fill="#fdfdfd"/>
<rect x="1867" y="318" width="8" height="16" fill="#fbfbfb"/>
<rect x="1771" y="334" width="16" height="16" fill="#ffffff"/>
<rect x="1787" y="334" width="16" height="16" fill="#f3f3f3"/>
<rect x="1803" y="334" width="16" height="16" fill="#f6f6f6"/>
<rect x="1819" y="334" width="16" height="16" fill="#f1f1f1"/>
<rect x="1835" y="334" width="16" height="16" fill="#f2f2f2"/>
<rect x="1851" y="334" width="16" height="16" fill="#ffffff"/>
<rect x="1867" y="334" width="8" height="16" fill="#fcfcfc"/>
<rect x="1771" y="350" width="16" height="16" fill="#ffffff"/>
<rect x="1787" y="350" width="16" height="16" fill="#efefef"/>
<rect x="1803" y="350" width="16" height="16" fill="#f3f3f3"/>
<rect x="1819" y="350" width="32" height="16" fill="#eeeeee"/>
<rect x="1851" y="350" width="16" height="16" fill="#ffffff"/>
<rect x="1867" y="350" width="8" height="16" fill="#fcfcfc"/>
<rect x="1771" y="366" width="96" height="16" fill="#fdfdfd"/>
<rect x="1867" y="366" width="8" height="16" fill="#fbfbfb"/>
<rect x="1771" y="382" width="16" height="16" fill="#ffffff"/>
<rect x="1787" y="382" width="16" height="16" fill="#e4e4e4"/>
<rect x="1803" y="382" width="16" height="16" fill="#eaeaea"/>
<rect x="1819" y="382" width="16" height="16" fill="#dadada"/>
<rect x="1835" y="382" width="16" height="16" fill="#d6d6d6"/>
<rect x="1851" y="382" width="16" height="16" fill="#ffffff"/>
<rect x="1867" y="382" width="8" height="16" fill="#fcfcfc"/>
<rect x="1771" y="398" width="96" height="16" fill="#fdfdfd"/>
<rect x="1867" y="398" width="8" height="16" fill="#fbfbfb"/>
<rect x="1771" y="414" width="16" height="16" fill="#ffffff"/>
<rect x="1787" y="414" width="16" height="16" fill="#f8f8f8"/>
<rect x="1803" y="414" width="16" height="16" fill="#fafafa"/>
<rect x="1819" y="414" width="32" height="16" fill="#f5f5f5"/>
<rect x="1851" y="414" width="16" height="16" fill="#ffffff"/>
<rect x="1867" y="414" width="8" height="16" fill="#fcfcfc"/>
<rect x="1771" y="430" width="16" height="16" fill="#ffffff"/>
<rect x="1787" y="430" width="16" height="16" fill="#ededed"/>
<rect x="1803" y="430" width="16" height="16" fill="#f2f2f2"/>
<rect x="1819" y="430" width="16" height="16" fill="#e5e5e5"/>
<rect x="1835" y="430" width="16" height="16" fill="#e4e4e4"/>
<rect x="1851" y="430" width="16" height="16" fill="#ffffff"/>
<rect x="1867" y="430" width="8" height="16" fill="#fcfcfc"/>
<rect x="1771" y="446" width="96" height="16" fill="#fdfdfd"/>
<rect x="1867" y="446" width="8" height="16" fill="#fbfbfb"/>
<rect x="1771" y="462" width="16" height="16" fill="#ffffff"/>
<rect x="1787" y="462" width="32" height="16" fill="#e8e8e8"/>
<rect x="1819" y="462" width="32" height="16" fill="#dcdcdc"/>
<rect x="1851" y="462" width="16" height="16" fill="#ffffff"/>
<rect x="1867" y="462" width="8" height="16" fill="#fcfcfc"/>
<rect x="1771" y="478" width="16" height="16" fill="#ffffff"/>
<rect x="1787" y="478" width="32" height="16" fill="#fbfbfb"/>
<rect x="1819" y="478" width="32" height="16" fill="#f9f9f9"/>
<rect x="1851" y="478" width="16" height="16" fill="#ffffff"/>
<rect x="1867" y="478" width="8" height="16" fill="#fcfcfc"/>
<rect x="1771" y="494" width="16" height="16" fill="#fdfdfd"/>
<rect x="1787" y="494" width="16" height="16" fill="#fafafa"/>
<rect x="1803" y="494" width="16" height="16" fill="#fbfbfb"/>
<rect x="1819" y="494" width="16" height="16" fill="#f8f8f8"/>
<rect x="1835" y="494" width="16" height="16" fill="#f9f9f9"/>
<rect x="1851" y="494" width="16" height="16" fill="#fdfdfd"/>
<rect x="1867" y="494" width="8" height="16" fill="#fbfbfb"/>
<rect x="1771" y="510" width="16" height="16" fill="#ffffff"/>
<rect x="1787" y="510" width="16" height="16" fill="#e7e7e7"/>
<rect x="1803" y="510" width="16" height="16" fill="#eeeeee"/>
<rect x="1819" y="510" width="16" height="16" fill="#dbdbdb"/>
<rect x="1835" y="510" width="16" height="16" fill="#e3e3e3"/>
<rect x="1851" y="510" width="16" height="16" fill="#ffffff"/>
<rect x="1867" y="510" width="8" height="16" fill="#fcfcfc"/>
<rect x="1771" y="526" width="96" height="16" fill="#fdfdfd"/>
<rect x="1867" y="526" width="8" height="16" fill="#fbfbfb"/>
<rect x="1771" y="542" width="16" height="16" fill="#ffffff"/>
<rect x="1787" y="542" width="16" height="16" fill="#ececec"/>
<rect x="1803" y="542" width="16" height="16" fill="#f1f1f1"/>
<rect x="1819" y="542" width="32" height="16" fill="#e8e8e8"/>
<rect x="1851" y="542" width="16" height="16" fill="#ffffff"/>
<rect x="1867" y="542" width="8" height="16" fill="#fcfcfc"/>
<rect x="1771" y="558" width="16" height="16" fill="#ffffff"/>
<rect x="1787" y="558" width="16" height="16" fill="#f6f6f6"/>
<rect x="1803" y="558" width="16" height="16" fill="#f8f8f8"/>
<rect x="1819" y="558" width="32" height="16" fill="#f4f4f4"/>
<rect x="1851" y="558" width="16" height="16" fill="#ffffff"/>
<rect x="1867" y="558" width="8" height="16" fill="#fcfcfc"/>
<rect x="1771" y="574" width="96" height="16" fill="#fdfdfd"/>
<rect x="1867" y="574" width="8" height="16" fill="#fbfbfb"/>
<rect x="1771" y="590" width="16" height="16" fill="#ffffff"/>
<rect x="1787" y="590" width="16" height="16" fill="#e6e6e6"/>
<rect x="1803" y="590" width="16" height="16" fill="#e4e4e4"/>
<rect x="1819" y="590" width="16" height="16" fill="#d7d7d7"/>
<rect x="1835" y="590" width="16" height="16" fill="#d6d6d6"/>
<rect x="1851" y="590" width="16" height="16" fill="#ffffff"/>
<rect x="1867" y="590" width="8" height="16" fill="#fcfcfc"/>
<rect x="1771" y="606" width="96" height="16" fill="#fdfdfd"/>
<rect x="1867" y="606" width="8" height="16" fill="#fbfbfb"/>
<rect x="1771" y="622" width="16" height="16" fill="#ffffff"/>
<rect x="1787" y="622" width="32" height="16" fill="#f1f1f1"/>
<rect x="1819" y="622" width="16" height="16" fill="#eaeaea"/>
<rect x="1835" y="622" width="16" height="16" fill="#f1f1f1"/>
<rect x="1851" y="622" width="16" height="16" fill="#ffffff"/>
<rect x="1867" y="622" width="8" height="16" fill="#fcfcfc"/>
<rect x="1771" y="638" width="16" height="16" fill="#ffffff"/>
<rect x="1787" y="638" width="16" height="16" fill="#f3f3f3"/>
<rect x="1803" y="638" width="16" height="16" fill="#f2f2f2"/>
<rect x="1819" y="638" width="16" height="16" fill="#ececec"/>
<rect x="1835" y="638" width="16" height="16" fill="#f3f3f3"/>
<rect x="1851" y="638" width="16" height="16" fill="#ffffff"/>
<rect x="1867" y="638" width="8" height="16" fill="#fcfcfc"/>
<rect x="1771" y="654" width="96" height="16" fill="#fdfdfd"/>
<rect x="1867" y="654" width="8" height="16" fill="#fbfbfb"/>
<rect x="1771" y="670" width="16" height="16" fill="#ffffff"/>
<rect x="1787" y="670" width="16" height="16" fill="#e4e4e4"/>
<rect x="1803" y="670" width="16" height="16" fill="#e2e2e2"/>
<rect x="1819" y="670" width="16" height="16" fill="#d8d8d8"/>
<rect x="1835" y="670" width="16" height="16" fill="#d6d6d6"/>
<rect x="1851" y="670" width="16" height="16" fill="#ffffff"/>
<rect x="1867" y="670" width="8" height="16" fill="#fcfcfc"/>
<rect x="1771" y="686" width="96" height="16" fill="#fdfdfd"/>
<rect x="1867" y="686" width="8" height="16" fill="#fbfbfb"/>
<rect x="1771" y="702" width="16" height="16" fill="#ffffff"/>
<rect x="1787" y="702" width="16" height="16" fill="#f6f6f6"/>
<rect x="1803" y="702" width="32" height="16" fill="#f5f5f5"/>
<rect x="1835" y="702" width="16" height="16" fill="#f2f2f2"/>
<rect x="1851" y="702" width="16" height="16" fill="#ffffff"/>
<rect x="1867" y="702" width="8" height="16" fill="#fcfcfc"/>
<rect x="1771" y="718" width="16" height="16" fill="#ffffff"/>
<rect x="1787" y="718" width="16" height="16" fill="#efefef"/>
<rect x="1803" y="718" width="32" height="16" fill="#ededed"/>
<rect x="1835" y="718" width="16" height="16" fill="#e7e7e7"/>
<rect x="1851" y="718" width="16" height="16" fill="#ffffff"/>
<rect x="1867" y="718" width="8" height="16" fill="#fcfcfc"/>
<rect x="1771" y="734" width="96" height="16" fill="#fdfdfd"/>
<rect x="1867" y="734" width="8" height="16" fill="#fbfbfb"/>
<rect x="1771" y="750" width="16" height="7" fill="#ffffff"/>
<rect x="1787" y="750" width="16" height="7" fill="#eeeeee"/>
<rect x="1803" y="750" width="32" height="7" fill="#efefef"/>
<rect x="1835" y="750" width="16" height="7" fill="#eaeaea"/>
<rect x="1851" y="750" width="16" height="7" fill="#ffffff"/>
<rect x="1867" y="750" width="8" height="7" fill="#fcfcfc"/>
</svg>
<div id="sb"><div id="arr"></div><div id="thumb"></div></div>
</div></body></html>
